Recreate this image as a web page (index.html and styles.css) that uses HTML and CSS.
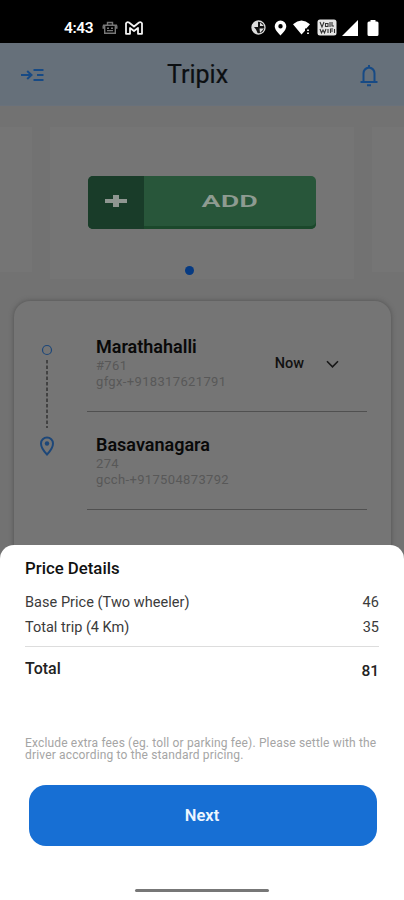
FILE: index.html
```html
<!DOCTYPE html>
<html lang="en">
<head>
<meta charset="utf-8">
<title>Tripix</title>
<link rel="stylesheet" href="styles.css">
</head>
<body>
<div class="phone">
  <div class="status">
    <span class="time">4:43</span>
    <svg class="pot" width="16" height="14" viewBox="0 0 16 14" fill="none" stroke="#777" stroke-width="1.4"><path d="M1 4.200h14M2.700 4.500v7.800h10.600V4.500M5.500 4V1.500h5V4M1.200 4.500v2.500h2M14.800 4.500v2.500h-2M5 7.200h2M9 7.200h2M5 9.600h6"/></svg>
    <svg class="mail" width="18" height="14" viewBox="0 0 18 14" fill="none" stroke="#f2f2f2" stroke-width="1.8" stroke-linejoin="round"><path d="M1 2.500Q2 .5 4 1.500l5 4 5-4Q16 .5 17 2.500V12.800h-4V7L9 10 5 7v5.800H1z"/></svg>
    <span class="grow"></span>
    <svg class="globe" width="15" height="15" viewBox="0 0 15 15"><circle cx="7.500" cy="7.500" r="6.500" fill="#111" stroke="#ddd" stroke-width="1.300"/><path d="M7 1v6H3l2 2.500L7 14Q1 13 1 7.500T7 1zM9 2.500l4 3.500H9zM8.500 8.500H13L9 13z" fill="#ddd"/></svg>
    <svg class="place" width="13" height="16" viewBox="0 0 13 16"><path fill="#fff" fill-rule="evenodd" d="M6.500.5A5.800 5.800 0 0 0 .7 6.300C.7 10.300 6.500 15.500 6.500 15.500s5.800-5.200 5.800-9.200A5.800 5.800 0 0 0 6.500.5zm0 3.600a2.200 2.200 0 1 1 0 4.400 2.200 2.200 0 0 1 0-4.400z"/></svg>
    <svg class="wifi" width="18" height="15" viewBox="0 0 18 15"><path fill="#fff" d="M0 4.200Q8.500-3 17 4.200L13.300 8.500H12v2.200L8.500 14.500z"/><path fill="#ddd" d="M14 9.500h2v1.500h-2zM14 12.500h2V14h-2z"/></svg>
    <svg class="volte" width="20" height="17" viewBox="0 0 20 17"><rect x=".5" y=".5" width="19" height="16" rx="2.500" fill="#e6e6e6"/><path d="M3 3l2 5 2-5M8.500 4.500h2.500v3H8.500zM13 3v5M15 3v4h2M3 10l1.500 4L6 11l1.500 3L9 10M11 10v4M13.500 14v-4H16M13.500 12H16M17.500 10v4" fill="none" stroke="#333" stroke-width="1.100"/></svg>
    <svg class="signal" width="16" height="16" viewBox="0 0 16 16"><path fill="#fff" d="M0 16L16 0v16z"/></svg>
    <svg class="battery" width="12" height="16" viewBox="0 0 12 16"><path fill="#fff" d="M3.500 0h5v1.500H10q1.500 0 1.500 1.500v11.500q0 1.500-1.500 1.500H2Q.5 16 .5 14.500V3Q.5 1.500 2 1.500h1.500z"/></svg>
  </div>
  <header class="bar">
    <svg class="menu" width="24" height="14" viewBox="0 0 24 14" fill="none" stroke="#174a85" stroke-width="2"><path d="M0 7h10M6.200 3l4.300 4-4.300 4M12.500 2H22.500M16 7h6.500M12.500 12H22.500"/></svg>
    <h1>Tripix</h1>
    <svg class="bell" width="20" height="23" viewBox="0 0 20 23" fill="none" stroke="#174a85" stroke-width="2"><path d="M1.500 18h17M4.500 18V9.500Q4.500 4.500 10 3.500Q15.500 4.500 15.500 9.500V18M10 1v3M8 21.300h4"/></svg>
  </header>
  <section class="carousel">
    <div class="slide edge"></div>
    <div class="slide center">
      <div class="add"><span class="plus"><svg width="24" height="14" viewBox="0 0 24 14"><path stroke="#8f9691" stroke-width="4" d="M1 7h22"/><path stroke="#8f9691" stroke-width="6" d="M12 1v12"/></svg></span><span class="addtext"><b>ADD</b></span></div>
      <i class="dot"></i>
    </div>
    <div class="slide edge"></div>
  </section>
  <main class="trip">
    <div class="route">
      <svg width="16" height="116" viewBox="0 0 16 116" fill="none" stroke="#1d4779"><circle cx="8" cy="7" r="4.500" stroke-width="1.200"/><path d="M8 17v68" stroke="#3e3e3e" stroke-width="1.800" stroke-dasharray="3.500 2"/><path d="M8 94.500a6 6 0 0 0-6 6C2 105.300 8 111.500 8 111.500s6-6.200 6-11A6 6 0 0 0 8 94.500z" stroke-width="2"/><circle cx="8" cy="100.500" r="2.200" fill="#1d4779" stroke="none"/></svg>
    </div>
    <div class="stops">
      <div class="stop">
        <div><h2 class="from">Marathahalli</h2><p class="num">#761</p><p class="contact">gfgx-+918317621791</p></div>
        <div class="when"><span>Now</span><svg width="13" height="9" viewBox="0 0 13 9" fill="none" stroke="#171717" stroke-width="1.600"><path d="M1 1.300l5.500 5.500L12 1.300"/></svg></div>
      </div>
      <div class="stop">
        <div><h2 class="to">Basavanagara</h2><p class="num">274</p><p class="contact">gcch-+917504873792</p></div>
      </div>
    </div>
  </main>
  <section class="sheet">
    <h3>Price Details</h3>
    <div class="row base"><span>Base Price (Two wheeler)</span><span>46</span></div>
    <div class="row distance"><span>Total trip (4 Km)</span><span>35</span></div>
    <div class="row total"><span>Total</span><b>81</b></div>
    <p class="note">Exclude extra fees (eg. toll or parking fee). Please settle with the<br>driver according to the standard pricing.</p>
    <button class="next">Next</button>
    <div class="home"></div>
  </section>
</div>
</body>
</html>
```
FILE: styles.css
```css
* { box-sizing: border-box; }
body { margin: 0; background: #727272; font-family: Roboto, "Liberation Sans", sans-serif; color: #111; }
h1, h2, h3, p { margin: 0; }
svg { display: block; flex: none; }
.phone { width: 404px; height: 900px; overflow: hidden; display: flex; flex-direction: column; }
.status { height: 43px; flex: none; background: #000; display: flex; align-items: center; padding: 12px 25px 0 64px; color: #fff; }
.time { width: 38px; font-size: 15.5px; font-weight: 600; letter-spacing: -.4px; padding-top: 1px; }
.mail { margin-left: 7px; }
.grow { flex: 1; }
.place { margin-left: 8px; }
.wifi { margin-left: 6px; }
.volte { margin-left: 6px; }
.signal { margin-left: 5px; }
.battery { margin-left: 9px; }
.bar { height: 63px; flex: none; background: #66707a; border-bottom: 1px solid #69717b; display: flex; align-items: center; padding: 0 25px 0 21px; }
.menu { margin-top: 2px; }
.bar h1 { margin: 2px 0 0 122px; flex: 1; font-size: 25px; font-weight: 400; -webkit-text-stroke: .2px #0c0f12; line-height: 30px; color: #0c0f12; }
.bell { margin-top: 2px; }
.carousel { height: 194px; flex: none; background: #727272; display: flex; gap: 18px; padding-top: 21px; }
.slide { background: #757575; height: 145px; }
.edge { width: 32px; }
.center { width: 304px; height: 152px; display: flex; flex-direction: column; align-items: center; padding-top: 49px; }
.add { width: 228px; height: 53px; margin-left: -1px; display: flex; border-radius: 5px; overflow: hidden; background: #28563a; box-shadow: inset 0 -3px #1b482b; }
.plus { width: 56px; background: #193c29; display: flex; align-items: center; justify-content: center; padding-bottom: 4px; }
.addtext { flex: 1; display: flex; align-items: center; justify-content: center; color: #8e9b91; padding-bottom: 4px; }
.addtext b { font-size: 17px; font-weight: 600; transform: scaleX(1.680); }
.dot { width: 9px; height: 9px; margin: 37px 26px 0 0; border-radius: 50%; background: #063a82; flex: none; }
.trip { height: 300px; flex: none; margin: 1px 13px 0 14px; border-radius: 16px; background: #757575; box-shadow: 0 0 5px #505050; display: flex; padding: 35px 24px 0 26px; }
.route { width: 47px; padding-top: 7px; }
.route svg { margin-left: -1px; }
.stops { flex: 1; }
.stop { height: 98px; display: flex; justify-content: space-between; }
.stop:first-child { height: 76px; border-bottom: 1.500px solid #505050; }
.stop:last-child { border-bottom: 1.500px solid #505050; padding-top: 22px; }
.stop > div:first-child { padding-left: 9px; }
.stop h2 { font-size: 18px; line-height: 22px; font-weight: 600; color: #090909; }
.stop p { color: #585858; font-size: 13px; line-height: 15px; letter-spacing: .35px; white-space: nowrap; }
.stop .num { line-height: 16px; }
.when { display: flex; align-items: center; height: 54px; gap: 22px; margin-right: 28px; font-size: 14.5px; font-weight: 500; }
.when svg { margin-top: 3px; }
.sheet { position: absolute; left: 0; top: 545px; width: 404px; height: 355px; background: #fff; border-radius: 14px 14px 0 0; padding: 12px 25px 0; }
.sheet h3 { font-size: 16.8px; line-height: 22px; font-weight: 500; }
.row { display: flex; justify-content: space-between; font-size: 14.5px; color: #3b3b3b; }
.base { height: 25px; margin-top: 11px; line-height: 25px; letter-spacing: .04px; }
.distance { height: 32px; line-height: 25px; border-bottom: 1px solid #ddd; }
.total { height: 44px; padding-top: 10px; line-height: 24px; font-size: 16px; font-weight: 500; color: #222; }
.total b { font-weight: 500; padding-top: 2px; font-size: 15.500px; }
.note { height: 25px; margin-top: 46px; font-size: 12px; line-height: 12px; letter-spacing: .16px; color: #a5a5a5; white-space: nowrap; }
.next { display: block; width: 348px; height: 61px; margin: 23px 0 0 4px; border: 0; border-radius: 17px; background: #176fd4; color: #edf6ff; font: 600 16.5px Roboto, sans-serif; padding: 0 2px 1px 0; }
.home { width: 134px; height: 3px; margin: 43px auto 0; border-radius: 2px; background: #777; }
```
